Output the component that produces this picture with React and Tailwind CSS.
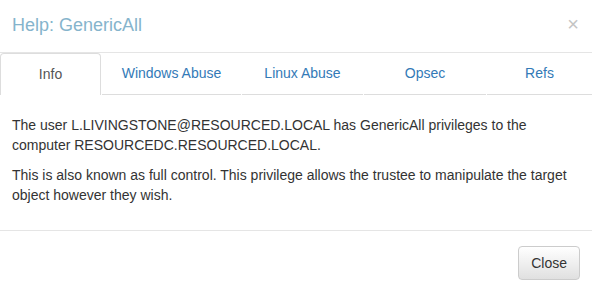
export default function App() {
  const tabs = [
    { label: "Info", w: "w-[101px]", active: true },
    { label: "Windows Abuse", w: "w-[139px]" },
    { label: "Linux Abuse", w: "w-[121px]" },
    { label: "Opsec", w: "w-[122px]" },
    { label: "Refs", w: "flex-1" },
  ];
  return (
    <div
      className="w-[592px] h-[292px] bg-white text-[14px] text-[#333] overflow-hidden"
      style={{ fontFamily: '"Liberation Sans", Arial, sans-serif' }}
    >
      <div className="h-[53px] border-b border-[#e5e5e5] flex items-start justify-between pl-[12px] pr-[13px] pt-[12px]">
        <h4 className="text-[18px] leading-[26px] text-[#85b4cc]">Help: GenericAll</h4>
        <span className="text-[20px] leading-[18px] text-[#c4c4c4] mt-[3px]">×</span>
      </div>
      <div className="flex h-[42px]">
        {tabs.map((t) =>
          t.active ? (
            <div
              key={t.label}
              className={`${t.w} shrink-0 flex items-center justify-center border border-b-0 border-[#ddd] rounded-t-[4px] text-[#555]`}
            >
              {t.label}
            </div>
          ) : (
            <div
              key={t.label}
              className={`${t.w} shrink-0 flex items-center justify-center border-b border-[#ddd] text-[#337ab7] ml-[1px] first:ml-0`}
            >
              {t.label}
            </div>
          )
        )}
      </div>
      <div className="px-[12px] pt-[20px] pb-[15px] leading-[20px] border-b border-[#e5e5e5]">
        <p className="mb-[10px]">
          The user L.LIVINGSTONE@RESOURCED.LOCAL has GenericAll privileges to the computer
          RESOURCEDC.RESOURCED.LOCAL.
        </p>
        <p className="mb-[10px]">
          This is also known as full control. This privilege allows the trustee to manipulate the
          target object however they wish.
        </p>
      </div>
      <div className="flex justify-end pr-[12px] pt-[15px]">
        <button className="h-[34px] px-[12px] border border-[#ccc] rounded-[4px] bg-gradient-to-b from-white to-[#e0e0e0] text-[#333] text-[14px]">
          Close
        </button>
      </div>
    </div>
  );
}
